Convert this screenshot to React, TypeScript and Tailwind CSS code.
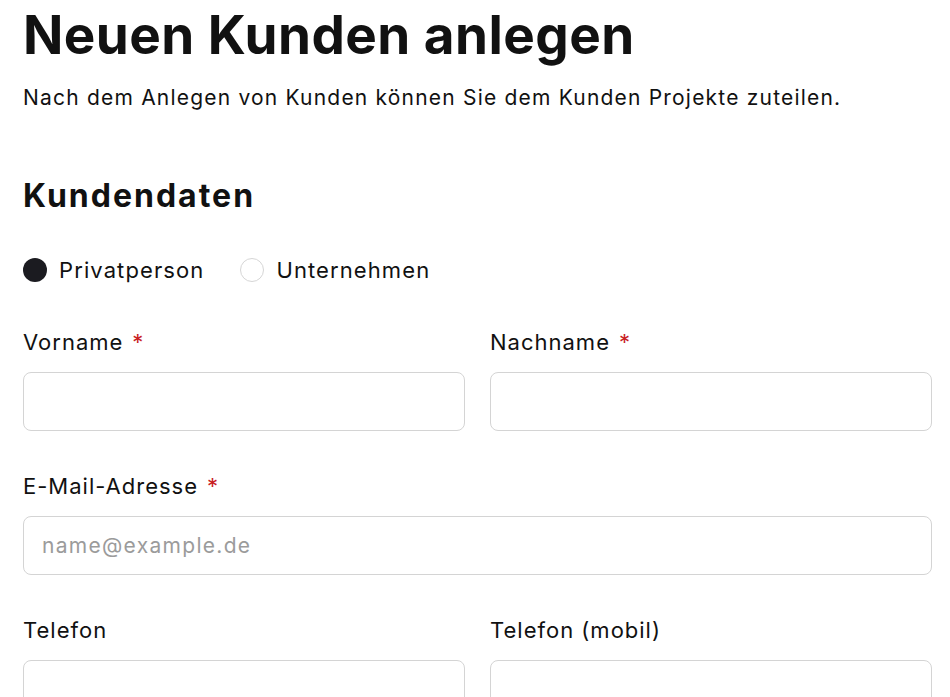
import React from "react";

function Label({ text, required }: { text: string; required?: boolean }) {
  return (
    <label className="block text-[22px] leading-[28px] tracking-[1px] text-[#111111] mb-[16px]">
      {text}
      {required && <span className="text-[#c8201e] ml-[9px]">*</span>}
    </label>
  );
}

function Input({ placeholder }: { placeholder?: string }) {
  return (
    <input
      type="text"
      placeholder={placeholder}
      className="block w-full h-[59px] rounded-[8px] border border-[#d4d4d4] bg-white px-[18px] text-[21px] tracking-[1.3px] text-[#111] placeholder:text-[#9b9b9b] outline-none"
    />
  );
}

export default function App() {
  return (
    <div
      className="min-h-screen bg-white pl-[23px] pr-[18px] pt-[5px] text-[#111111]"
      style={{ fontFamily: "Inter, 'Noto Sans', sans-serif" }}
    >
      <h1 className="text-[53px] leading-[60px] font-bold tracking-[0.45px]">Neuen Kunden anlegen</h1>
      <p className="mt-[19px] text-[21px] leading-[28px] tracking-[1.2px]">
        Nach dem Anlegen von Kunden können Sie dem Kunden Projekte zuteilen.
      </p>
      <h2 className="mt-[64px] text-[32px] leading-[40px] font-bold tracking-[2px]">Kundendaten</h2>
      <div className="mt-[40px] flex items-center text-[22px] leading-[28px] tracking-[1.1px]">
        <label className="flex items-center gap-[12px]">
          <span className="w-[24px] h-[24px] rounded-full bg-[#1b1b20]" />
          Privatperson
        </label>
        <label className="ml-[36px] flex items-center gap-[12px]">
          <span className="w-[24px] h-[24px] rounded-full border border-[#d6d6d6] bg-white" />
          Unternehmen
        </label>
      </div>
      <div className="mt-[44px] grid grid-cols-2 gap-x-[25px] gap-y-[41px]">
        <div>
          <Label text="Vorname" required />
          <Input />
        </div>
        <div>
          <Label text="Nachname" required />
          <Input />
        </div>
        <div className="col-span-2">
          <Label text="E-Mail-Adresse" required />
          <Input placeholder="name@example.de" />
        </div>
        <div>
          <Label text="Telefon" />
          <Input />
        </div>
        <div>
          <Label text="Telefon (mobil)" />
          <Input />
        </div>
      </div>
    </div>
  );
}
